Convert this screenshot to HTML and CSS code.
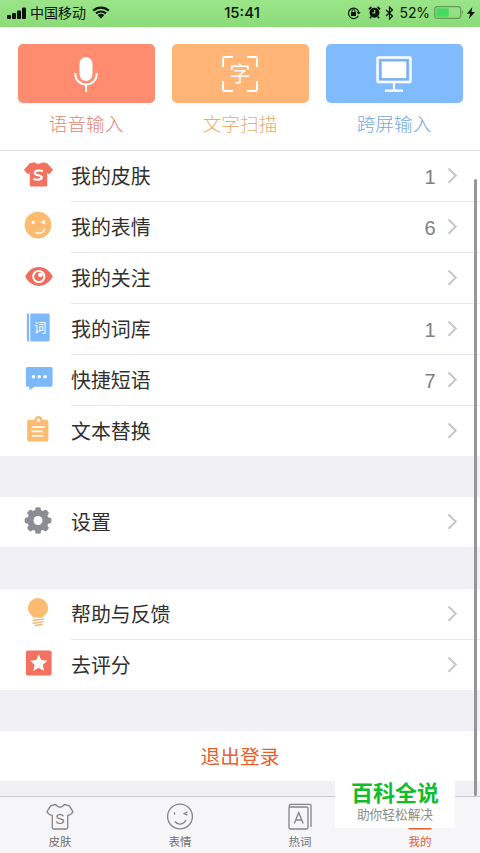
FILE: index.html
```html
<!DOCTYPE html>
<html lang="zh-CN">
<head>
<meta charset="utf-8">
<title>我的</title>
<link rel="stylesheet" href="styles.css">
</head>
<body>
<div class="screen">
  <header class="status">
    <div class="status-left">
      <svg class="signal" width="20" height="12" viewBox="0 0 20 12"><rect x="0" y="8" width="4" height="4" rx="1"/><rect x="5" y="6" width="4" height="6" rx="1"/><rect x="10" y="3.5" width="4" height="8.5" rx="1"/><rect x="15" y="0.5" width="4" height="11.5" rx="1"/></svg>
      <span class="carrier">中国移动</span>
      <svg class="wifi" width="18" height="13" viewBox="0 0 18 13"><path d="M1.2 4.6a11.5 11.5 0 0 1 15.6 0M4 7.4a7.5 7.5 0 0 1 10 0" fill="none" stroke="#0b130a" stroke-width="2.2"/><path d="M5.7 9.1a5 5 0 0 1 6.6 0L9 12.6z"/></svg>
    </div>
    <span class="clock">15:41</span>
    <div class="status-right">
      <svg class="lock" width="14" height="14" viewBox="0 0 14 14"><path d="M11.3 9.7A5.2 5.2 0 1 1 11.7 6" fill="none" stroke="#0b130a" stroke-width="1.2"/><path d="M9.7 6h4l-2 2.6z"/><rect x="4" y="6" width="5" height="4" rx=".5"/><path d="M5 6.3V5a1.5 1.5 0 0 1 3 0v1.3" fill="none" stroke="#0b130a"/></svg>
      <svg class="alarm" width="13" height="13" viewBox="0 0 13 13"><circle cx="6.5" cy="6.8" r="5"/><path d="M1 3.3L3.4 1M12 3.3L9.6 1M3 10.8l-1 1.4M10 10.8l1 1.4" stroke="#0b130a" stroke-width="1.8"/><path d="M6.7 4v3H4.3" fill="none" stroke="#9be58b" stroke-width="1.1"/></svg>
      <svg class="bluetooth" width="9" height="14" viewBox="0 0 9 14"><path d="M1 4l6.5 6-3 3V1l3 3L1 10" fill="none" stroke="#0b130a" stroke-width="1.2"/></svg>
      <span class="percent">52%</span>
      <svg class="battery" width="30" height="13" viewBox="0 0 30 13"><rect x=".7" y=".7" width="26" height="11.6" rx="2.5" fill="none" stroke="#629b58" stroke-width="1.2"/><rect x="2.3" y="2.3" width="12.4" height="8.4" rx="1" fill="#47d862"/><path d="M28 4.5q2 2 0 4z" fill="#629b58"/></svg>
      <svg class="bolt" width="8" height="12" viewBox="0 0 8 12"><path d="M5.3 0L0 6.7h3.2L1.8 12 8 4.9H4.5z"/></svg>
    </div>
  </header>

  <section class="shortcuts">
    <div class="shortcut voice">
      <div class="tile"><svg width="28" height="40" viewBox="0 0 28 40"><rect x="7.5" y="3" width="13" height="24" rx="6.5" fill="#fff"/><path d="M3.300 19v1.300a10.700 10.200 0 0 0 21.400 0V19M14 30.500V38" fill="none" stroke="#fff" stroke-width="2"/></svg></div>
      <span class="label">语音输入</span>
    </div>
    <div class="shortcut scan">
      <div class="tile"><svg width="36" height="36" viewBox="0 0 36 36"><path d="M1 11V3q0-2 2-2h8M25 1h8q2 0 2 2v8M35 25v8q0 2-2 2h-8M11 35H3q-2 0-2-2v-8" fill="none" stroke="#fff" stroke-width="2"/><text x="18" y="25.3" text-anchor="middle" class="scan-glyph">字</text></svg></div>
      <span class="label">文字扫描</span>
    </div>
    <div class="shortcut cross">
      <div class="tile"><svg width="36" height="36" viewBox="0 0 36 36"><rect x="1.5" y="1.5" width="33" height="24.5" rx="1" fill="none" stroke="#fff" stroke-width="2.4"/><rect x="5" y="4.8" width="26" height="18" fill="#fff" stroke="#6da7e5" stroke-width="1.2"/><path d="M18 27v8M9 34.7h18" fill="none" stroke="#fff" stroke-width="2.2"/></svg></div>
      <span class="label">跨屏输入</span>
    </div>
  </section>

  <main class="list">
    <section class="group">
      <div class="row"><span class="icon"><svg viewBox="0 0 32 32"><path d="M11.700 3.300q4.300 3.200 8.600 0L25 4.300 31 11l-3.700 4.700-2.300-1.200V27q0 1.500-1.500 1.500h-15Q7 28.500 7 27V14.500l-2.300 1.200L1 11l6-6.700z" fill="#f4705f"/><path d="M20.600 12.300c-4-1-8.200-.5-8.500 2.200-.3 2.900 7.600 1.500 7.300 4.500-.2 2.600-5 3-8.700 1.700" fill="none" stroke="#fff" stroke-width="2.200"/></svg></span><div class="body"><span class="title">我的皮肤</span><span class="count">1</span><i class="chevron"></i></div></div>
      <div class="row"><span class="icon"><svg viewBox="0 0 32 32"><circle cx="15.500" cy="15.500" r="13.800" fill="#fcbb70"/><circle cx="10.500" cy="12.700" r="1.600" fill="#fff"/><path d="M23 10.800l-3.500 1.900 3.500 1.700M13 23.200c4.300 1.800 8 .4 9.700-3.700" fill="none" stroke="#fff" stroke-width="1.500"/></svg></span><div class="body"><span class="title">我的表情</span><span class="count">6</span><i class="chevron"></i></div></div>
      <div class="row"><span class="icon"><svg viewBox="0 0 32 32"><path d="M2.300 16C9 3 23.600 3 30.700 16 23.600 29 9 29 2.300 16z" fill="#ee6c5e"/><circle cx="16.300" cy="16" r="5.800" fill="none" stroke="#fff" stroke-width="2"/><circle cx="18" cy="14.300" r="2.500" fill="#fff"/></svg></span><div class="body"><span class="title">我的关注</span><i class="chevron"></i></div></div>
      <div class="row"><span class="icon"><svg viewBox="0 0 32 32"><path d="M4 1.500h2.300v29H5.500Q4 30.500 4 29zM7.500 1.500h18.500q1.500 0 1.500 1.500v26q0 1.500-1.500 1.500H7.500z" fill="#7db8fb"/><text x="17.700" y="21" text-anchor="middle" class="dict-glyph">词</text></svg></span><div class="body"><span class="title">我的词库</span><span class="count">1</span><i class="chevron"></i></div></div>
      <div class="row"><span class="icon"><svg viewBox="0 0 32 32"><path d="M4.800 4h24q1.700 0 1.700 1.700v17q0 1.700-1.700 1.700H12L6.500 28v-3.600H4.800Q3 24.400 3 22.700v-17Q3 4 4.800 4z" fill="#7db8fb"/><g fill="#fff"><circle cx="10.800" cy="14.200" r="1.800"/><circle cx="16.800" cy="14.200" r="1.800"/><circle cx="22.800" cy="14.200" r="1.800"/></g></svg></span><div class="body"><span class="title">快捷短语</span><span class="count">7</span><i class="chevron"></i></div></div>
      <div class="row"><span class="icon"><svg viewBox="0 0 32 32"><path d="M6 6h6a4 4 0 0 1 8 0h4.500q1.700 0 1.700 1.700v19q0 1.700-1.700 1.700H6q-1.700 0-1.700-1.700v-19Q4.300 6 6 6z" fill="#fcbb70"/><circle cx="16" cy="6.500" r="1.800" fill="#fff"/><path d="M9 13.500h13.500M9 18h11M9 22.500h12" stroke="#fff" stroke-width="1.800"/></svg></span><div class="body"><span class="title">文本替换</span><i class="chevron"></i></div></div>
    </section>
    <section class="group">
      <div class="row"><span class="icon"><svg viewBox="0 0 32 32"><g fill="#8a8d92"><circle cx="15.500" cy="16" r="11"/><rect id="tooth" x="12.500" y="2.200" width="6" height="27.600" rx="2"/><use href="#tooth" transform="rotate(45 15.500 16)"/><use href="#tooth" transform="rotate(90 15.500 16)"/><use href="#tooth" transform="rotate(135 15.500 16)"/></g><circle cx="15.500" cy="16" r="4.600" fill="#fff"/></svg></span><div class="body"><span class="title">设置</span><i class="chevron"></i></div></div>
    </section>
    <section class="group help">
      <div class="row"><span class="icon"><svg viewBox="0 0 32 32"><path d="M10.200 21.200C9.500 18 5 17 5 11.500a10.500 10.500 0 0 1 21 0c0 5.500-4.500 6.500-5.200 9.700z" fill="#fcbb70"/><path d="M10 24.300l11.500-1.600M10 27l11.500-1.600M12 29.700l8-1.500" stroke="#f0b572" stroke-width="1.500"/></svg></span><div class="body"><span class="title">帮助与反馈</span><i class="chevron"></i></div></div>
      <div class="row"><span class="icon"><svg viewBox="0 0 32 32"><rect x="3" y="2.500" width="26.500" height="26" rx="2" fill="#f4705f"/><path d="M16.200 6.500l2.600 5.900 6.400.7-4.800 4.300 1.400 6.300-5.600-3.300-5.600 3.300 1.400-6.300-4.800-4.300 6.400-.7z" fill="#fff"/></svg></span><div class="body"><span class="title">去评分</span><i class="chevron"></i></div></div>
    </section>
    <section class="group logout">退出登录</section>
  </main>

  <nav class="tabs">
    <div class="tab"><svg width="30" height="28" viewBox="0 0 30 28"><path d="M10.600 1.500q4.400 5.500 8.800 0l4.500 1q1.800 2.200 4 6.300-1.200 2.900-5.200 3.500V24.500q0 1.500-1.500 1.500H8.800q-1.500 0-1.500-1.500V12.300Q3.300 11.700 2 8.800q2.300-4.100 4-6.300z"/><text x="15" y="21" text-anchor="middle" class="shirt-letter">S</text></svg><span>皮肤</span></div>
    <div class="tab"><svg width="30" height="28" viewBox="0 0 30 28"><circle cx="15" cy="13.500" r="12.400"/><path d="M10 18.500c3 4 8.500 3.300 11-1.500M22.500 8.800l-3.300 1.800 3.300 1.600M9.500 9.200v2.500"/></svg><span>表情</span></div>
    <div class="tab"><svg width="30" height="28" viewBox="0 0 30 28"><rect x="4" y="4" width="19" height="22" rx="1.500"/><path d="M4.300 4.300Q4 1.300 6 1.300h18.500q1.500 0 1.500 1.500V24"/><path d="M9.300 20.500L13.700 9.500l4.400 11M10.800 17h5.800"/></svg><span>热词</span></div>
    <div class="tab active"><svg width="30" height="28" viewBox="0 0 30 28"><path class="person" d="M3.500 26.500v-5q3-5 11.500-5t11.500 5v5z"/></svg><span>我的</span></div>
  </nav>

  <div class="scrollbar"></div>
  <aside class="watermark"><strong>百科全说</strong><span>助你轻松解决</span></aside>
</div>
</body>
</html>
```
FILE: styles.css
```css
* { box-sizing: border-box; }

body {
  margin: 0;
  background: #fff;
  font-family: "Liberation Sans", "Noto Sans CJK SC", sans-serif;
  color: #303030;
}

svg { display: block; flex: none; }

.screen {
  position: relative;
  display: flex;
  flex-direction: column;
  width: 480px;
  height: 853px;
  overflow: hidden;
  background: #f0f0f5;
}

.status {
  display: grid;
  grid-template-columns: 1fr auto 1fr;
  align-items: center;
  height: 27px;
  padding: 0 5px 2px 7px;
  background: linear-gradient(#9ae589, #8bdb78);
  color: #0b130a;
  fill: #0b130a;
}

.status-left,
.status-right { display: flex; align-items: center; }
.status-right { justify-content: flex-end; }
.carrier { margin-left: 3px; font-size: 14px; line-height: 20px; }
.wifi { margin-left: 6px; }
.clock { padding-left: 2px; font: 500 15px/20px Inter, sans-serif; }
.alarm { margin-left: 7px; }
.bluetooth { margin-left: 4px; }
.percent { margin-left: 6px; font: 14px/20px Inter, sans-serif; letter-spacing: -0.1px; }
.battery { margin-left: 4px; }
.bolt { margin-left: 3px; }

.shortcuts {
  display: grid;
  grid-template-columns: repeat(3, 137px);
  justify-content: center;
  gap: 17px;
  height: 124px;
  padding-top: 17px;
  background: #fff;
  border-bottom: 1px solid #e3e3e5;
}

.shortcut { display: flex; flex-direction: column; align-items: center; }

.tile {
  display: flex;
  align-items: center;
  justify-content: center;
  width: 100%;
  height: 59px;
  border-radius: 5px;
}

.label { margin-top: 8px; font-size: 18.7px; font-weight: 300; line-height: 28px; }
.voice .tile { background: #ff8c6e; }
.voice .label { color: #e88573; }
.scan .tile { background: #ffb575; }
.scan .label { color: #e8ae70; }
.cross .tile { background: #80baff; }
.cross .label { color: #72a9df; }
.scan-glyph { font-size: 21px; fill: #fff; }
.dict-glyph { font-size: 13px; fill: #fff; }

.list { display: flex; flex-direction: column; gap: 41px; }
.group { background: #fff; }
.help { border-top: 1px solid #ededf0; }
.row { display: flex; height: 51px; padding-left: 23px; }
.row:last-child { height: 50px; }
.icon { display: flex; align-items: center; width: 48px; padding-bottom: 4px; }
.icon svg { width: 31px; height: 31px; }

.body {
  display: flex;
  flex: 1;
  align-items: center;
  padding-right: 23px;
  border-bottom: 1px solid #e7e7e9;
}

.row:last-child .body { border-bottom: 0; }
.title { flex: 1; padding-top: 2px; font-size: 19.9px; line-height: 30px; }
.count { margin-right: 9px; padding-top: 2px; font: 20px/30px "Liberation Sans", sans-serif; color: #808080; }

.chevron {
  width: 10.5px;
  height: 10.5px;
  margin-right: 2px;
  border: solid #c5c5c8;
  border-width: 2px 2px 0 0;
  transform: translate(-1px, -1px) rotate(45deg);
}

.logout {
  height: 50px;
  font-size: 19.8px;
  line-height: 52px;
  text-align: center;
  color: #e5602f;
}

.tabs {
  display: grid;
  grid-template-columns: repeat(4, 1fr);
  height: 57px;
  margin-top: auto;
  background: #f6f6f8;
  border-top: 1px solid #cbcbce;
}

.tab {
  display: flex;
  flex-direction: column;
  align-items: center;
  padding-top: 6px;
  font-size: 11.5px;
  line-height: 18px;
  color: #707070;
}

.tab span { margin-top: 2px; }
.tab svg { fill: none; stroke: #858587; stroke-width: 1.3; }
.tab text { fill: #808082; stroke: none; }
.tab .person { fill: #ea5d2c; stroke: none; }
.active { color: #e5602f; }
.shirt-letter { font-size: 14px; }

.scrollbar {
  position: absolute;
  top: 179px;
  right: 3px;
  width: 3px;
  height: 617px;
  border-radius: 2px;
  background: #969699;
}

.watermark {
  position: absolute;
  top: 777px;
  left: 335px;
  display: flex;
  flex-direction: column;
  align-items: center;
  width: 120px;
  height: 51px;
  padding-top: 3px;
  background: #fff;
}

.watermark strong { font-size: 22px; font-weight: 700; line-height: 28px; color: #12bd2b; }
.watermark span { font-size: 12.7px; line-height: 15px; color: #8b8b8b; }
```
